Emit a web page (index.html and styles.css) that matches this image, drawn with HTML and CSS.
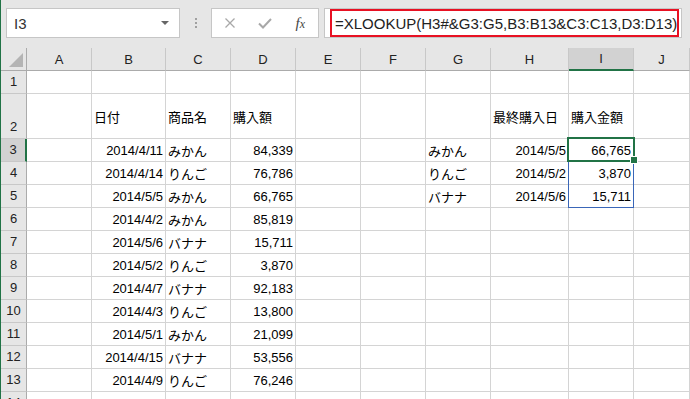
FILE: index.html
```html
<!DOCTYPE html>
<html lang="ja">
<head>
  <meta charset="UTF-8" />
  <meta name="viewport" content="width=device-width, initial-scale=1.0"/>
  <title>XLOOKUP</title>
  <link rel="stylesheet" href="styles.css">
</head>
<body>
  <div class="app">
    <div class="formula-bar">
      <div class="name-box"><span>I3</span><span class="caret"></span></div>
      <div class="grip"><i></i><i></i><i></i></div>
      <div class="fx-buttons">
        <span class="btn">
          <svg width="10" height="10" viewBox="0 0 10 10"><path d="M0.5 0.5 L9.5 9.5 M9.5 0.5 L0.5 9.5" stroke="#a8a8a8" stroke-width="1.3" fill="none"/></svg>
        </span>
        <span class="btn">
          <svg width="14" height="11" viewBox="0 0 14 11"><path d="M1 5.5 L5 9.5 L13 1" stroke="#a8a8a8" stroke-width="2" fill="none"/></svg>
        </span>
        <span class="btn fx"><i>f</i><i class="x">x</i></span>
      </div>
      <div class="formula-input">
        <div class="formula-text">=XLOOKUP(H3#&amp;G3:G5,B3:B13&amp;C3:C13,D3:D13)</div>
      </div>
    </div>

    <div class="sheet">
      <div class="row head">
        <div class="corner"></div>
        <div class="hd">A</div><div class="hd">B</div><div class="hd">C</div><div class="hd">D</div><div class="hd">E</div>
        <div class="hd">F</div><div class="hd">G</div><div class="hd">H</div><div class="hd active">I</div><div class="hd">J</div>
      </div>
      <div class="row">
        <div class="rh">1</div>
        <div class="c"></div><div class="c"></div><div class="c"></div><div class="c"></div><div class="c"></div>
        <div class="c"></div><div class="c"></div><div class="c"></div><div class="c"></div><div class="c"></div>
      </div>
      <div class="row tall">
        <div class="rh">2</div>
        <div class="c"></div><div class="c">日付</div><div class="c">商品名</div><div class="c">購入額</div><div class="c"></div>
        <div class="c"></div><div class="c"></div><div class="c">最終購入日</div><div class="c">購入金額</div><div class="c"></div>
      </div>
      <div class="row">
        <div class="rh active">3</div>
        <div class="c"></div><div class="c num">2014/4/11</div><div class="c">みかん</div><div class="c num">84,339</div><div class="c"></div>
        <div class="c"></div><div class="c">みかん</div><div class="c num">2014/5/5</div><div class="c num sel">66,765<span class="handle"></span></div><div class="c"></div>
      </div>
      <div class="row">
        <div class="rh">4</div>
        <div class="c"></div><div class="c num">2014/4/14</div><div class="c">りんご</div><div class="c num">76,786</div><div class="c"></div>
        <div class="c"></div><div class="c">りんご</div><div class="c num">2014/5/2</div><div class="c num">3,870</div><div class="c"></div>
      </div>
      <div class="row">
        <div class="rh">5</div>
        <div class="c"></div><div class="c num">2014/5/5</div><div class="c">みかん</div><div class="c num">66,765</div><div class="c"></div>
        <div class="c"></div><div class="c">バナナ</div><div class="c num">2014/5/6</div><div class="c num">15,711</div><div class="c"></div>
      </div>
      <div class="row">
        <div class="rh">6</div>
        <div class="c"></div><div class="c num">2014/4/2</div><div class="c">みかん</div><div class="c num">85,819</div><div class="c"></div>
        <div class="c"></div><div class="c"></div><div class="c"></div><div class="c"></div><div class="c"></div>
      </div>
      <div class="row">
        <div class="rh">7</div>
        <div class="c"></div><div class="c num">2014/5/6</div><div class="c">バナナ</div><div class="c num">15,711</div><div class="c"></div>
        <div class="c"></div><div class="c"></div><div class="c"></div><div class="c"></div><div class="c"></div>
      </div>
      <div class="row">
        <div class="rh">8</div>
        <div class="c"></div><div class="c num">2014/5/2</div><div class="c">りんご</div><div class="c num">3,870</div><div class="c"></div>
        <div class="c"></div><div class="c"></div><div class="c"></div><div class="c"></div><div class="c"></div>
      </div>
      <div class="row">
        <div class="rh">9</div>
        <div class="c"></div><div class="c num">2014/4/7</div><div class="c">バナナ</div><div class="c num">92,183</div><div class="c"></div>
        <div class="c"></div><div class="c"></div><div class="c"></div><div class="c"></div><div class="c"></div>
      </div>
      <div class="row">
        <div class="rh">10</div>
        <div class="c"></div><div class="c num">2014/4/3</div><div class="c">りんご</div><div class="c num">13,800</div><div class="c"></div>
        <div class="c"></div><div class="c"></div><div class="c"></div><div class="c"></div><div class="c"></div>
      </div>
      <div class="row">
        <div class="rh">11</div>
        <div class="c"></div><div class="c num">2014/5/1</div><div class="c">みかん</div><div class="c num">21,099</div><div class="c"></div>
        <div class="c"></div><div class="c"></div><div class="c"></div><div class="c"></div><div class="c"></div>
      </div>
      <div class="row">
        <div class="rh">12</div>
        <div class="c"></div><div class="c num">2014/4/15</div><div class="c">バナナ</div><div class="c num">53,556</div><div class="c"></div>
        <div class="c"></div><div class="c"></div><div class="c"></div><div class="c"></div><div class="c"></div>
      </div>
      <div class="row">
        <div class="rh">13</div>
        <div class="c"></div><div class="c num">2014/4/9</div><div class="c">りんご</div><div class="c num">76,246</div><div class="c"></div>
        <div class="c"></div><div class="c"></div><div class="c"></div><div class="c"></div><div class="c"></div>
      </div>
      <div class="row">
        <div class="rh">14</div>
        <div class="c"></div><div class="c"></div><div class="c"></div><div class="c"></div><div class="c"></div>
        <div class="c"></div><div class="c"></div><div class="c"></div><div class="c"></div><div class="c"></div>
      </div>
    </div>
  </div>
</body>
</html>
```

FILE: styles.css
```css
body {
  margin: 0;
  padding: 0;
  background: #fff;
  color: #000;
  font-family: "Liberation Sans", "Noto Sans CJK JP", sans-serif;
  font-size: 13px;
  overflow: hidden;
}
.app {
  height: 399px;
  border-left: 1px solid #217346;
  overflow: hidden;
}

/* formula bar */
.formula-bar {
  display: flex;
  align-items: flex-start;
  height: 48px;
  box-sizing: border-box;
  padding: 8px 0 0 5px;
  background: #e6e6e6;
}
.name-box {
  width: 174px;
  height: 30px;
  box-sizing: border-box;
  border: 1px solid #c6c6c6;
  background: #fff;
  display: flex;
  align-items: center;
  justify-content: space-between;
  padding: 0 7px;
  font-size: 15px;
  color: #333;
}
.caret {
  width: 0;
  height: 0;
  border-left: 4px solid transparent;
  border-right: 4px solid transparent;
  border-top: 4px solid #666;
  margin-right: 3px;
}
.grip {
  width: 31px;
  height: 30px;
  display: flex;
  flex-direction: column;
  align-items: center;
  justify-content: center;
  gap: 2px;
}
.grip i {
  width: 2px;
  height: 2px;
  background: #a0a0a0;
}
.fx-buttons {
  width: 108px;
  height: 30px;
  box-sizing: border-box;
  border: 1px solid #c6c6c6;
  background: #fff;
  display: flex;
  align-items: center;
}
.btn {
  width: 36px;
  display: flex;
  justify-content: center;
  align-items: center;
}
.fx {
  font-family: "Liberation Serif", serif;
  font-size: 15px;
  color: #444;
}
.fx .x {
  font-size: 12px;
  margin-top: 3px;
}
.formula-input {
  width: 358px;
  height: 30px;
  margin-left: 5px;
  box-sizing: border-box;
  border: 1px solid #c6c6c6;
  background: #fff;
  padding: 0 0 0 5px;
}
.formula-text {
  width: 349px;
  height: 28px;
  box-sizing: border-box;
  border: 2px solid #e81123;
  padding: 0 0 0 3px;
  display: flex;
  align-items: center;
  font-size: 15px;
  color: #222;
  white-space: nowrap;
}

/* sheet grid */
.row {
  display: grid;
  grid-template-columns: 26px 65px 74px 65px 65px 65px 65px 65px 78px 65px 1fr;
  height: 23px;
}
.row.tall {
  height: 45px;
}
.c {
  box-sizing: border-box;
  border-right: 1px solid #d4d4d4;
  border-bottom: 1px solid #d4d4d4;
  display: flex;
  align-items: center;
  padding: 0 2px;
  white-space: nowrap;
}
.num {
  justify-content: flex-end;
}
.head .hd, .corner {
  box-sizing: border-box;
  background: #e6e6e6;
  border-right: 1px solid #c8c8c8;
  border-bottom: 1px solid #ababab;
  display: flex;
  align-items: center;
  justify-content: center;
  color: #222;
}
.corner {
  position: relative;
  border-right-color: #ababab;
}
.corner::after {
  content: "";
  position: absolute;
  right: 3px;
  bottom: 3px;
  width: 14px;
  height: 14px;
  background: #b4b4b4;
  clip-path: polygon(100% 0, 100% 100%, 0 100%);
}
.hd.active {
  background: #d2d2d2;
  border-bottom: 2px solid #217346;
}
.rh {
  box-sizing: border-box;
  background: #e6e6e6;
  border-right: 1px solid #ababab;
  border-bottom: 1px solid #c8c8c8;
  display: flex;
  align-items: flex-end;
  justify-content: center;
  line-height: 22px;
  color: #222;
}
.rh.active {
  background: #d2d2d2;
  border-right: 2px solid #217346;
}

/* selection and spill range */
.sel {
  position: relative;
}
.sel::before {
  content: "";
  position: absolute;
  left: -1px;
  top: -1px;
  width: 66px;
  height: 70px;
  box-sizing: border-box;
  border: 1px solid #3a66b8;
}
.sel::after {
  content: "";
  position: absolute;
  left: -2px;
  top: -2px;
  width: 68px;
  height: 25px;
  box-sizing: border-box;
  border: 2px solid #217346;
}
.handle {
  position: absolute;
  left: 61px;
  top: 17px;
  width: 6px;
  height: 6px;
  background: #217346;
  border: 1px solid #fff;
  z-index: 1;
}
```
